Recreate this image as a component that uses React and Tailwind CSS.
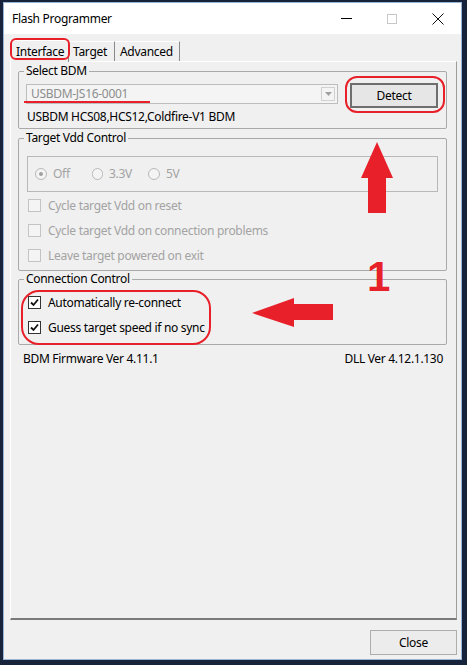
import React from 'react';

const red = '#e8202a';

function Check({ checked, disabled }) {
  return (
    <span
      className={`w-[13px] h-[13px] border flex items-center justify-center shrink-0 ${
        disabled ? 'border-[#c4c4c4] bg-[#f4f4f4]' : 'border-[#333333] bg-white'
      }`}
    >
      {checked && (
        <svg width="9" height="9" viewBox="0 0 9 9">
          <path d="M1 4.5 L3.5 7 L8 1.5" fill="none" stroke="#111" strokeWidth="1.8" />
        </svg>
      )}
    </span>
  );
}

function CheckRow({ label, checked, disabled }) {
  return (
    <div className="h-[25px] flex items-center gap-[7px] pl-[1px]">
      <Check checked={checked} disabled={disabled} />
      <span className={disabled ? 'text-[#a3a3a3]' : 'text-black'}>{label}</span>
    </div>
  );
}

function Radio({ label, selected }) {
  return (
    <div className="flex items-center gap-[6px]">
      <span className="w-[12px] h-[12px] rounded-full border border-[#b9b9b9] bg-[#f4f4f4] flex items-center justify-center">
        {selected && <span className="w-[4px] h-[4px] rounded-full bg-[#a0a0a0]" />}
      </span>
      <span className="text-[#a3a3a3]">{label}</span>
    </div>
  );
}

function Group({ title, children, className = '' }) {
  return (
    <fieldset className={`border border-[#a9a9a9] rounded-[2px] p-0 m-0 ${className}`}>
      <legend className="ml-[5px] px-[2px] leading-[16px]">{title}</legend>
      <div className="px-[8px]">{children}</div>
    </fieldset>
  );
}

export default function App() {
  return (
    <div className="relative w-[467px] h-[665px] overflow-hidden bg-[#16233a] pt-[2px] pl-[3px] font-['Noto_Sans',sans-serif] text-[12px] tracking-[-0.3px] text-black">
      <div className="w-[459px] h-[658px] flex flex-col bg-[#f0f0f0] border border-[#9ab6d6]">
        {/* title bar */}
        <div className="h-[31px] bg-white flex items-center">
          <span className="pl-[8px]">Flash Programmer</span>
          <div className="ml-auto flex h-full">
            <div className="w-[46px] flex items-center justify-center">
              <span className="w-[11px] h-px bg-black" />
            </div>
            <div className="w-[46px] flex items-center justify-center">
              <span className="w-[10px] h-[10px] border border-[#c8c8c8]" />
            </div>
            <div className="w-[46px] flex items-center justify-center">
              <svg width="12" height="12" viewBox="0 0 12 12">
                <path d="M0.5 0.5 L11.5 11.5 M11.5 0.5 L0.5 11.5" stroke="#111" strokeWidth="1" />
              </svg>
            </div>
          </div>
        </div>

        {/* body */}
        <div className="flex-1 flex flex-col pt-[5px] pl-[6px] pr-[4px]">
          <div className="flex items-end h-[22px]">
            <div className="relative z-10 h-[22px] w-[59px] -mb-px bg-[#f0f0f0] border-t border-l border-white border-r border-r-[#8a8a8a] flex items-center pl-[5px]">
              Interface
            </div>
            <div className="h-[20px] w-[46px] border-t border-white border-r border-r-[#8a8a8a] flex items-center pl-[4px]">
              Target
            </div>
            <div className="h-[20px] w-[65px] border-t border-white border-r border-r-[#8a8a8a] flex items-center pl-[5px]">
              Advanced
            </div>
          </div>

          <div className="h-[559px] border border-t-white border-l-white border-r-[#9c9c9c] border-b-2 border-b-[#7a7a7a] pt-px pl-[7px] pr-[9px] flex flex-col">
            <Group title="Select BDM">
              <div className="pt-[5px] flex items-start gap-[12px] -ml-[1px]">
                <div className="w-[312px] h-[20px] border border-[#bdbdbd] bg-[#f4f4f4] flex items-center justify-between pl-[4px] pr-[2px] text-[#8d8d8d]">
                  <span>USBDM-JS16-0001</span>
                  <span className="w-[14px] h-[14px] border border-[#d0d0d0] flex items-center justify-center">
                    <svg width="7" height="4" viewBox="0 0 7 4">
                      <path d="M0 0 L7 0 L3.5 4 Z" fill="#a0a0a0" />
                    </svg>
                  </span>
                </div>
                <button className="w-[88px] h-[25px] border-2 border-[#6e6e6e] bg-[#e6e6e6] flex items-center justify-center -mt-[1px]">
                  Detect
                </button>
              </div>
              <div className="mt-[1px] pb-[3px] leading-[16px]">USBDM HCS08,HCS12,Coldfire-V1 BDM</div>
            </Group>

            <Group title="Target Vdd Control" className="mt-[1px]">
              <div className="pt-[10px]">
                <div className="h-[36px] border border-[#b8b8b8] flex items-center gap-[16px] pl-[7px]">
                  <div className="w-[41px]"><Radio label="Off" selected /></div>
                  <div className="w-[40px]"><Radio label="3.3V" /></div>
                  <Radio label="5V" />
                </div>
                <div className="pt-px pb-[2px]">
                  <CheckRow label="Cycle target Vdd on reset" disabled />
                  <CheckRow label="Cycle target Vdd on connection problems" disabled />
                  <CheckRow label="Leave target powered on exit" disabled />
                </div>
              </div>
            </Group>

            <Group title="Connection Control">
              <div className="pt-[3px] pb-[4px]">
                <CheckRow label="Automatically re-connect" checked />
                <CheckRow label="Guess target speed if no sync" checked />
              </div>
            </Group>

            <div className="mt-[6px] flex justify-between pl-[5px] pr-[4px] leading-[16px]">
              <span>BDM Firmware Ver 4.11.1</span>
              <span>DLL Ver 4.12.1.130</span>
            </div>
          </div>

          <div className="flex justify-end mt-[10px]">
            <button className="w-[87px] h-[25px] border border-[#adadad] bg-[#ececec] flex items-center justify-center">
              Close
            </button>
          </div>
        </div>
      </div>

      {/* red annotations */}
      <div className="absolute z-20 left-[10px] top-[38px] w-[60px] h-[22px] border-2 rounded-[6px] border-[#e8202a]" />
      <div className="absolute z-20 left-[24px] top-[101px] w-[126px] h-[2px] bg-[#e8202a]" />
      <div className="absolute z-20 left-[345px] top-[76px] w-[100px] h-[37px] border-2 rounded-[12px] border-[#e8202a]" />
      <div className="absolute z-20 left-[21px] top-[290px] w-[190px] h-[55px] border-2 rounded-[18px] border-[#e8202a]" />
      <svg className="absolute z-20 left-[360px] top-[142px]" width="34" height="72" viewBox="0 0 34 72">
        <path d="M17 0 L33 36 L26 36 L26 71 L8 71 L8 36 L1 36 Z" fill={red} />
      </svg>
      <svg className="absolute z-20 left-[252px] top-[297px]" width="82" height="31" viewBox="0 0 82 31">
        <path d="M0 16 L42 1 L42 7 L81 7 L81 23 L42 23 L42 30 Z" fill={red} />
      </svg>
      <span className="absolute z-20 left-[367px] top-[253px] text-[42px] leading-[48px] font-bold font-['Liberation_Sans',sans-serif] tracking-normal text-[#e8202a]">
        1
      </span>
    </div>
  );
}
